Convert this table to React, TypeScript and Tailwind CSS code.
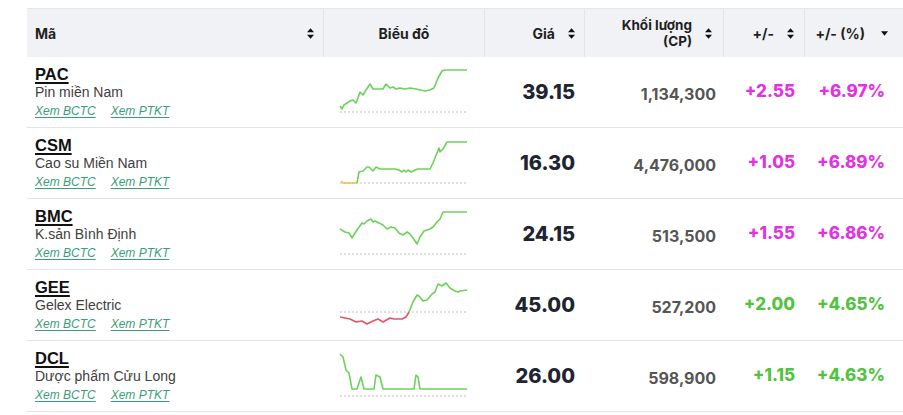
import React from "react";

type Seg = { color: string; pts: string };

type Row = {
  code: string;
  name: string;
  price: string;
  volume: string;
  change: string;
  pct: string;
  up: "ceil" | "up";
  base: number;
  segs: Seg[];
};

const GREEN = "#6dd15c";
const RED = "#e9536a";
const YELLOW = "#f2c230";

const rows: Row[] = [
  {
    code: "PAC",
    name: "Pin miền Nam",
    price: "39.15",
    volume: "1,134,300",
    change: "+2.55",
    pct: "+6.97%",
    up: "ceil",
    base: 47,
    segs: [
      {
        color: GREEN,
        pts: "1,41 3,44 5,40 8,38 11,36 14,35 17,38 19,33 21,27 24,30 27,25 31,19 34,24 44,24 47,19 51,23 54,22 57,24 61,23 66,24 71,23 77,24 81,25 86,26 91,25 95,23 99,13 103,6 106,5 128,5",
      },
    ],
  },
  {
    code: "CSM",
    name: "Cao su Miền Nam",
    price: "16.30",
    volume: "4,476,000",
    change: "+1.05",
    pct: "+6.89%",
    up: "ceil",
    base: 47,
    segs: [
      { color: YELLOW, pts: "2,45 4,47 18,47" },
      {
        color: GREEN,
        pts: "18,47 20,36 24,35 28,31 30,31 34,35 37,31 41,33 51,33 56,33 60,34 63,36 65,34 67,36 69,34 72,36 76,34 79,33 91,33 94,27 98,17 100,12 101,16 104,13 108,6 128,6",
      },
    ],
  },
  {
    code: "BMC",
    name: "K.sản Bình Định",
    price: "24.15",
    volume: "513,500",
    change: "+1.55",
    pct: "+6.86%",
    up: "ceil",
    base: 47,
    segs: [
      {
        color: GREEN,
        pts: "1,22 6,25 10,26 13,31 18,23 23,16 25,17 28,14 32,12 34,15 36,14 40,16 44,18 48,22 52,20 56,21 60,26 64,28 68,25 71,27 74,31 78,37 81,30 85,24 91,22 94,20 98,15 101,12 104,5 128,5",
      },
    ],
  },
  {
    code: "GEE",
    name: "Gelex Electric",
    price: "45.00",
    volume: "527,200",
    change: "+2.00",
    pct: "+4.65%",
    up: "up",
    base: 34,
    segs: [
      {
        color: RED,
        pts: "1,39 6,40 11,41 17,44 23,43 28,46 34,43 39,41 44,44 51,40 55,41 63,41 67,39 70,34",
      },
      {
        color: GREEN,
        pts: "70,34 74,24 78,17 80,18 84,23 88,22 93,16 96,14 99,6 103,8 107,5 111,10 116,13 119,14 121,13 128,12",
      },
    ],
  },
  {
    code: "DCL",
    name: "Dược phẩm Cửu Long",
    price: "26.00",
    volume: "598,900",
    change: "+1.15",
    pct: "+4.63%",
    up: "up",
    base: 47,
    segs: [
      {
        color: GREEN,
        pts: "1,5 4,8 7,21 10,24 13,40 18,40 22,28 25,40 35,40 37,26 41,28 44,40 75,40 77,26 79,28 81,40 128,40",
      },
    ],
  },
];

const SortIcon = () => (
  <svg viewBox="0 0 8 12" className="w-[7px] h-[11px] shrink-0">
    <polygon points="4,0 8,4.6 0,4.6" fill="#111" />
    <polygon points="0,7.4 8,7.4 4,12" fill="#111" />
  </svg>
);

const Caret = () => (
  <svg viewBox="0 0 8 5" className="w-[7px] h-[5px] shrink-0">
    <polygon points="0,0 8,0 4,5" fill="#111" />
  </svg>
);

const Spark = ({ row }: { row: Row }) => (
  <svg width="130" height="50" viewBox="0 0 130 50">
    <line x1="1" y1={row.base} x2="129" y2={row.base} stroke="#bdbdbd" strokeWidth="1" strokeDasharray="2 2" />
    {row.segs.map((s, i) => (
      <polyline key={i} points={s.pts} fill="none" stroke={s.color} strokeWidth="1.6" strokeLinejoin="round" />
    ))}
  </svg>
);

const cols = "grid grid-cols-[297px_161px_100px_139px_81px_89px]";

export default function App() {
  return (
    <div className="bg-white w-[903px] h-[415px] overflow-hidden pt-2 pl-[27px] font-['Inter',sans-serif]">
      <div className={`${cols} h-[49px] bg-[#f0f2f5] border-t border-[#e3e6ea] text-[14px] font-bold text-[#1f1f1f]`}>
        <div className="flex items-center justify-between pl-2 pr-[9px] border-r border-[#e1e4e8]">
          <span>Mã</span>
          <SortIcon />
        </div>
        <div className="flex items-center justify-center border-r border-[#e1e4e8]">Biểu đồ</div>
        <div className="flex items-center justify-end gap-[13px] pr-[9px] border-r border-[#e1e4e8]">
          <span>Giá</span>
          <SortIcon />
        </div>
        <div className="flex items-center justify-end gap-[13px] pr-[11px] border-r border-[#e1e4e8]">
          <div className="flex flex-col items-end text-[13.5px] leading-[16px]">
            <span>Khối lượng</span>
            <span>(CP)</span>
          </div>
          <SortIcon />
        </div>
        <div className="flex items-center justify-end gap-[13px] pr-[10px] border-r border-[#e1e4e8]">
          <span>+/-</span>
          <SortIcon />
        </div>
        <div className="flex items-center justify-end gap-4 pr-[6px]">
          <span>+/- (%)</span>
          <Caret />
        </div>
      </div>

      {rows.map((r) => {
        const color = r.up === "ceil" ? "text-[#e332e3]" : "text-[#52c33f]";
        return (
          <div key={r.code} className={`${cols} h-[71px] border-b border-[#e3e3e3]`}>
            <div className="pl-2 pt-[8px] font-['Liberation_Sans',Arial,sans-serif]">
              <div className="text-[16.5px] leading-[18px] font-bold text-[#111] underline underline-offset-[2px] decoration-2">
                {r.code}
              </div>
              <div className="mt-[1px] text-[14px] leading-[16px] text-[#404040]">{r.name}</div>
              <div className="mt-[4px] flex gap-[15px] text-[12px] leading-[14px] italic text-[#3a9e78] underline underline-offset-2">
                <span>Xem BCTC</span>
                <span>Xem PTKT</span>
              </div>
            </div>
            <div className="pl-[15px] pt-2">
              <Spark row={r} />
            </div>
            <div className="flex items-center justify-end pr-[10px] text-[20px] font-extrabold text-[#1e2430]">{r.price}</div>
            <div className="flex items-center justify-end pr-2 pt-[3px] text-[16px] font-bold text-[#555]">{r.volume}</div>
            <div className={`flex items-center justify-end pr-[10px] text-[17px] font-extrabold ${color}`}>{r.change}</div>
            <div className={`flex items-center justify-end pr-[9px] text-[17px] font-extrabold ${color}`}>{r.pct}</div>
          </div>
        );
      })}
    </div>
  );
}
